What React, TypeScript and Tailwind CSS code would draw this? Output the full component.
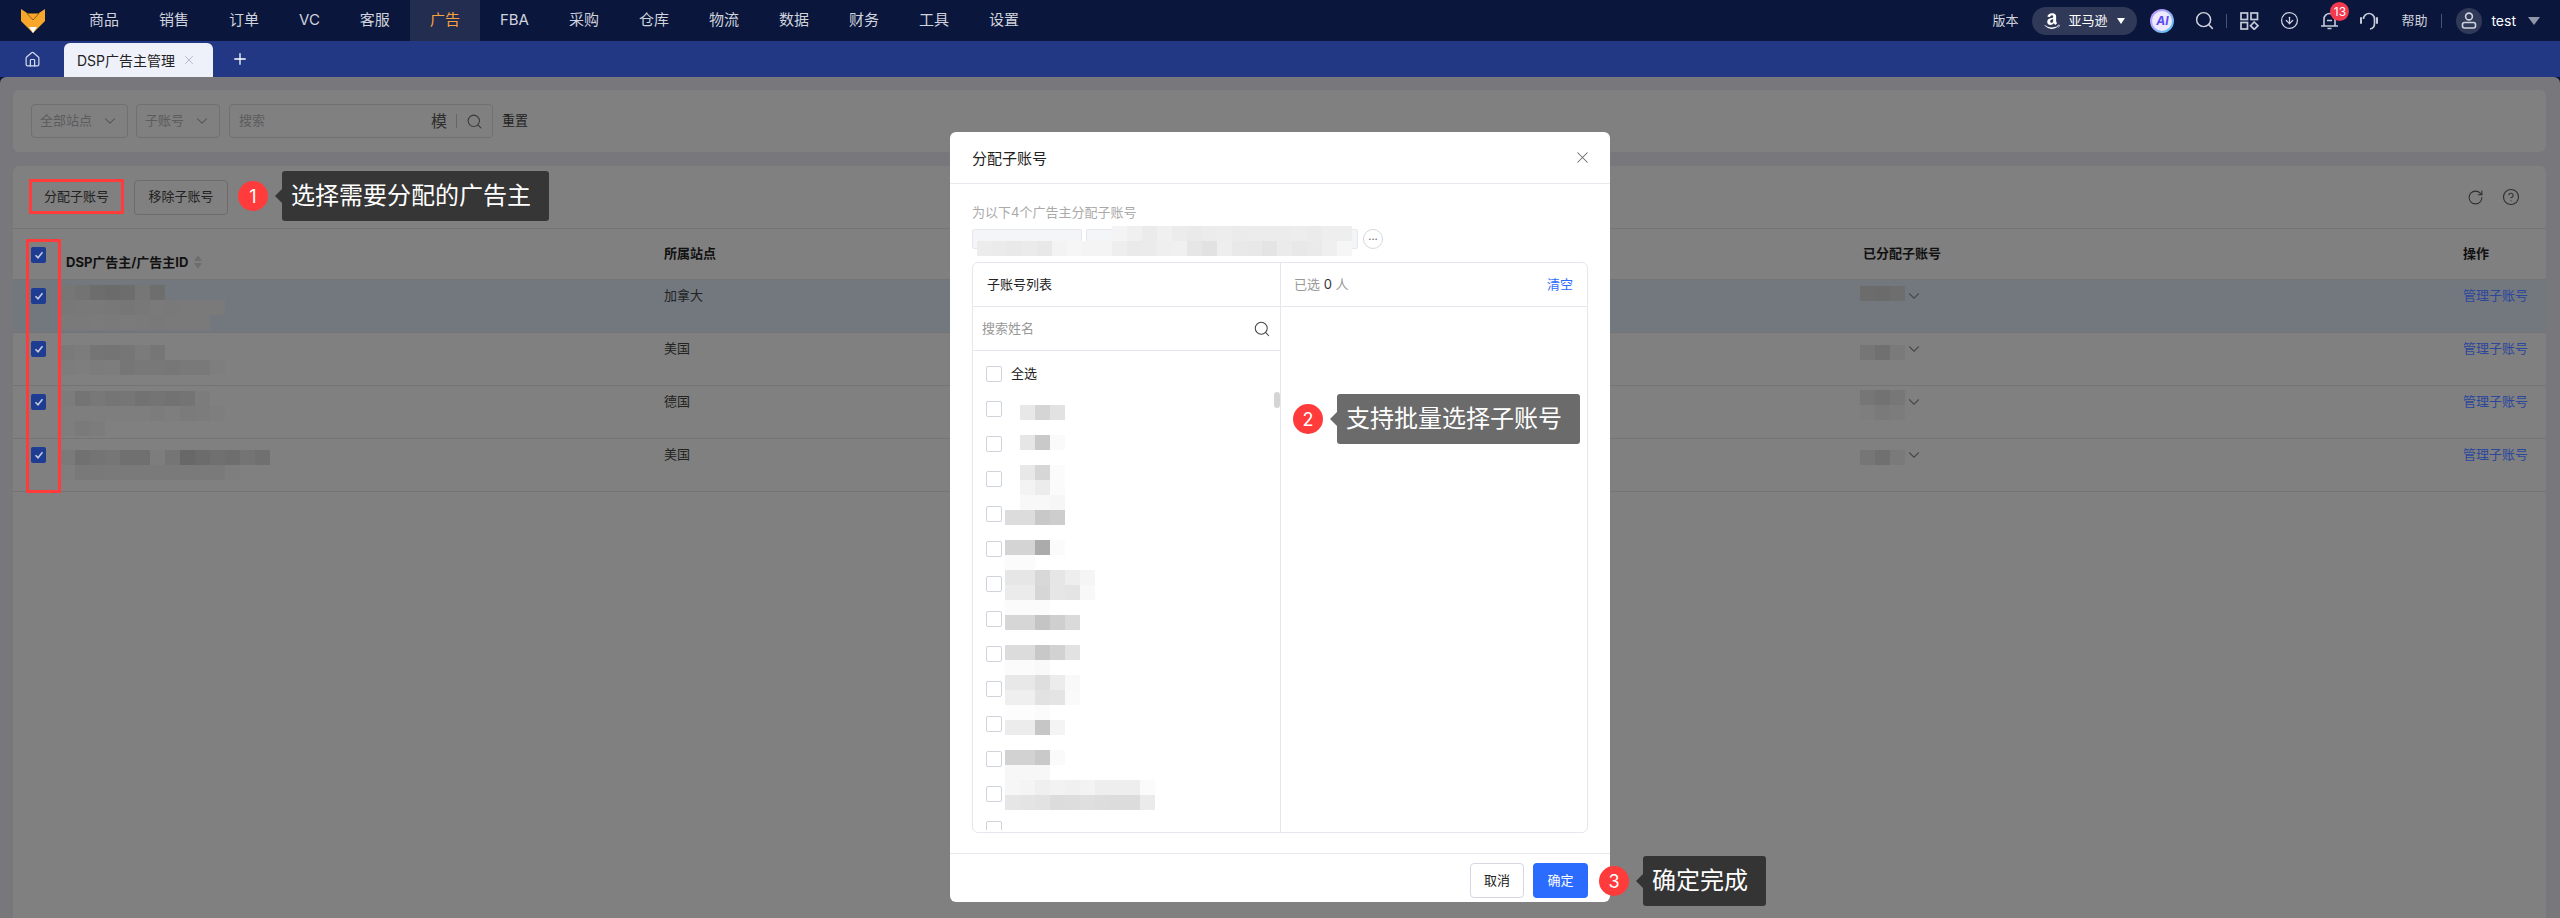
import {
  ChevronDown,
  CircleArrowDown,
  CircleHelp,
  House,
  Plus,
  RotateCw,
  Search,
  X,
} from "lucide-react";
import { FaAmazon } from "react-icons/fa";

const navItems = ["商品", "销售", "订单", "VC", "客服", "广告", "FBA", "采购", "仓库", "物流", "数据", "财务", "工具", "设置"];

// grey values per 15px cell, "--" leaves the cell empty
function Mosaic({ x, y, rows }: { x: number; y: number; rows: string[] }) {
  return (
    <div className="absolute flex flex-col" style={{ left: x, top: y }}>
      {rows.map((row, i) => (
        <div key={i} className="flex h-[15px]">
          {row.split(" ").map((g, j) => (
            <div
              key={j}
              className="h-[15px] w-[15px]"
              style={{ background: g === "--" ? "transparent" : `#${g}${g}${g}` }}
            />
          ))}
        </div>
      ))}
    </div>
  );
}

function Checkbox({ checked }: { checked?: boolean }) {
  if (checked) {
    return (
      <div className="flex h-[16px] w-[15px] items-center justify-center rounded-[2px] bg-[#1f3c93]">
        <svg width="10" height="10" viewBox="0 0 10 10" fill="none" stroke="#c4cbe0" strokeWidth="1.6">
          <path d="M1.5 5.2 4 7.8 8.5 2.2" />
        </svg>
      </div>
    );
  }
  return <div className="h-[16px] w-[16px] rounded-[2px] border border-[#cfd3dc] bg-white" />;
}

function Step({ n }: { n: number }) {
  return (
    <div className="flex h-[30px] w-[30px] items-center justify-center rounded-full bg-[#ff3b3b] text-[18px] text-white">
      {n}
    </div>
  );
}

function Arrow({ color }: { color: string }) {
  return (
    <div
      className="h-0 w-0 border-y-[7px] border-r-[7px] border-y-transparent"
      style={{ borderRightColor: color }}
    />
  );
}

function Select({ label, width }: { label: string; width: string }) {
  return (
    <div className={`flex h-[34px] items-center justify-between rounded-[4px] border border-[#707072] pl-[8px] pr-[8px] text-[13px] text-[#5c5c5e] ${width}`}>
      {label}
      <ChevronDown size={18} strokeWidth={1.4} className="text-[#4f4f51]" />
    </div>
  );
}

const rows = [
  { site: "加拿大", bg: "bg-[#73787f]" },
  { site: "美国", bg: "" },
  { site: "德国", bg: "" },
  { site: "美国", bg: "" },
];

export default function App() {
  return (
    <div className="relative h-[918px] w-[2560px] overflow-hidden bg-[#0a163c] text-[13px] [font-family:Inter,'Noto_Sans_CJK_SC',sans-serif]">
      {/* top nav */}
      <div className="flex h-[41px] items-stretch bg-[#0a163c] text-[#d0d3dc]">
        <div className="flex w-[69px] items-center pl-[21px]">
          <svg width="24" height="24" viewBox="0 0 24 24">
            <path d="M0 0 6 4h12l6-4v12L12 24 0 12Z" fill="#f9a72b" />
            <path d="M6 4.5h12L12 11Z" fill="#f9a72b" stroke="#8a6220" strokeWidth="1" />
            <path d="M8 18h8l-4 6Z" fill="#fff" />
          </svg>
        </div>
        {navItems.map((item) => (
          <div
            key={item}
            className={`flex items-center px-[20px] text-[15px] ${item === "广告" ? "bg-[#232d4f] text-[#f9a03f]" : ""}`}
          >
            {item}
          </div>
        ))}
        <div className="ml-auto flex items-center">
          <span className="text-[13px]">版本</span>
          <div className="ml-[14px] flex h-[28px] w-[105px] items-center rounded-full bg-[#303a58] pl-[11px] text-white">
            <FaAmazon size={18} />
            <span className="ml-[7px] text-[13px]">亚马逊</span>
            <div className="ml-[10px] h-0 w-0 border-x-[4.5px] border-t-[6px] border-x-transparent border-t-white" />
          </div>
          <div className="ml-[13px] flex h-[24px] w-[24px] items-center justify-center rounded-full bg-linear-to-br from-[#c98cff] to-[#2fc6f0] p-[2px]">
            <div className="flex h-full w-full items-center justify-center rounded-full bg-[#ece9ff] text-[12px] font-bold italic text-[#5b4cf0]">
              AI
            </div>
          </div>
          <Search size={21} strokeWidth={1.7} className="ml-[20px] text-[#d0d3dc]" />
          <div className="ml-[11px] h-[14px] w-px bg-[#4a5270]" />
          <svg width="19" height="18" viewBox="0 0 19 18" fill="none" stroke="#c6cbd8" strokeWidth="1.7" className="ml-[13px]">
            <rect x="1" y="1" width="6.5" height="6.5" />
            <rect x="11" y="1" width="6.5" height="6.5" />
            <rect x="1" y="10.5" width="6.5" height="6.5" />
            <path d="M14.2 10 18 13.7l-3.8 3.7-3.7-3.7Z" />
          </svg>
          <CircleArrowDown size={19} strokeWidth={1.6} className="ml-[21px] text-[#d0d3dc]" />
          <div className="relative ml-[21px]">
            <svg width="19" height="19" viewBox="0 0 19 19" fill="none" stroke="#c6cbd8" strokeWidth="1.6">
              <path d="M1 15h17M4 15V8a5.5 5.5 0 0 1 11 0v7M7.5 17.5h4M7 9.5h5" />
            </svg>
            <div className="absolute left-[10px] top-[-9px] flex h-[19px] w-[19px] items-center justify-center rounded-full bg-[#f5394f] text-[12px] text-white">
              13
            </div>
          </div>
          <svg width="19" height="19" viewBox="0 0 19 19" fill="none" stroke="#c6cbd8" strokeWidth="1.7" className="ml-[20px]">
            <path d="M4.5 8a5.5 5.5 0 0 1 11 0v4.5c0 3-1.5 5-4.5 5.5" />
            <path d="M2 7v5M18 7v5" strokeWidth="2" strokeLinecap="round" />
          </svg>
          <span className="ml-[23px] text-[13px]">帮助</span>
          <div className="ml-[14px] h-[14px] w-px bg-[#4a5270]" />
          <div className="ml-[14px] flex h-[26px] w-[26px] items-center justify-center rounded-full bg-[#303a58]">
            <svg width="16" height="17" viewBox="0 0 16 17" fill="none" stroke="#d0d3dc" strokeWidth="1.6">
              <circle cx="8" cy="4.5" r="3.4" />
              <rect x="1.5" y="10.5" width="13" height="5.5" rx="2" />
            </svg>
          </div>
          <span className="ml-[9px] text-[14px] text-white">test</span>
          <div className="ml-[12px] mr-[20px] h-0 w-0 border-x-[6px] border-t-[8px] border-x-transparent border-t-[#8f96aa]" />
        </div>
      </div>

      {/* tab bar */}
      <div className="flex h-[36px] items-end bg-[#233884]">
        <div className="flex h-[36px] w-[64px] items-center pl-[24px]">
          <House size={17} strokeWidth={1.7} className="text-[#d6dbea]" />
        </div>
        <div className="flex h-[34px] w-[149px] items-center rounded-t-[6px] bg-[#eef0fa] pl-[13px] text-[14px] text-[#222]">
          DSP广告主管理
          <X size={14} strokeWidth={1.5} className="ml-[7px] text-[#aab2c4]" />
        </div>
        <div className="flex h-[36px] items-center pl-[18px]">
          <Plus size={18} strokeWidth={1.7} className="text-white" />
        </div>
      </div>

      {/* page */}
      <div className="flex h-[841px] flex-col gap-[14px] rounded-t-[6px] bg-[#77777c] pl-[13px] pr-[14px] pt-[13px]">
        <div className="flex h-[62px] items-center rounded-[6px] bg-[#808080] pl-[18px]">
          <Select label="全部站点" width="w-[97px]" />
          <div className="w-[8px]" />
          <Select label="子账号" width="w-[84px]" />
          <div className="ml-[9px] flex h-[34px] w-[264px] items-center rounded-[4px] border border-[#707072] pl-[9px] pr-[9px] text-[#5c5c5e]">
            搜索
            <span className="ml-auto text-[16px] text-[#2f2f2f]">模</span>
            <div className="mx-[9px] h-[14px] w-px bg-[#666]" />
            <Search size={17} strokeWidth={1.5} className="text-[#3a3a3a]" />
          </div>
          <span className="ml-[9px] text-[#222]">重置</span>
        </div>

        <div className="flex flex-1 flex-col rounded-t-[6px] bg-[#808080]">
          <div className="flex h-[63px] shrink-0 items-center border-b border-[#747478] pl-[16px] pr-[26px]">
            <div className="flex h-[35px] w-[95px] items-center justify-center text-[#222]">分配子账号</div>
            <div className="ml-[10px] flex h-[35px] w-[94px] items-center justify-center rounded-[4px] border border-[#6c6c6e] text-[#222]">
              移除子账号
            </div>
            <RotateCw size={17} strokeWidth={1.5} className="ml-auto text-[#2f2f2f]" />
            <CircleHelp size={18} strokeWidth={1.5} className="ml-[18px] text-[#2f2f2f]" />
          </div>

          <div className="grid h-[51px] shrink-0 grid-cols-[53px_598px_1199px_600px_1fr] border-b border-[#747478] pt-[15px] font-bold leading-[18px] text-[#111]">
            <div className="pl-[18px] pt-[3px]">
              <Checkbox checked />
            </div>
            <div className="flex items-center">
              DSP广告主/广告主ID
              <div className="ml-[6px] flex flex-col gap-[2px]">
                <div className="h-0 w-0 border-x-[4px] border-b-[6px] border-x-transparent border-b-[#6e6e6e]" />
                <div className="h-0 w-0 border-x-[4px] border-t-[6px] border-x-transparent border-t-[#6e6e6e]" />
              </div>
            </div>
            <div>所属站点</div>
            <div>已分配子账号</div>
            <div>操作</div>
          </div>

          {rows.map((row, i) => (
            <div
              key={i}
              className={`grid h-[53px] shrink-0 grid-cols-[53px_598px_1199px_600px_1fr] border-b border-[#747478] pt-[6px] leading-[18px] text-[#222] ${row.bg}`}
            >
              <div className="pl-[18px] pt-[2px]">
                <Checkbox checked />
              </div>
              <div />
              <div>{row.site}</div>
              <div className="pl-[42px] pt-[1px]">
                <ChevronDown size={18} strokeWidth={1.5} className="text-[#4a4a4a]" />
              </div>
              <div className="text-[#2c479c]">管理子账号</div>
            </div>
          ))}
        </div>
      </div>

      {/* blurred names in the table */}
      <Mosaic x={60} y={285} rows={["76 73 6d 6b 6d 76 6e", "78 79 79 78 76 78 7a 79 7a 7a 7a", "7a 7a 7b 7a 7b 7a 79 7a 7a 7a"]} />
      <Mosaic x={60} y={345} rows={["7a 7c 75 74 76 7b 76", "7d 7e 7c 7d 76 78 78 77 79 79 7e"]} />
      <Mosaic x={60} y={391} rows={["7c 74 78 75 76 72 74 72 74 7c", "7e 7e 7e 7e 7e 7e 7c 7e 7b 7c 7e", "7e 7a 7c"]} />
      <Mosaic x={60} y={450} rows={["7a 71 74 76 70 70 7d 75 68 6c 70 6e 74 70", "7e 79 79 7a 7a 7a 7a 7a 7a 7a 7a 7e"]} />
      <Mosaic x={1860} y={286} rows={["6c 6b 6e"]} />
      <Mosaic x={1860} y={345} rows={["76 70 7a"]} />
      <Mosaic x={1860} y={390} rows={["76 72 77", "7e 7a 7c"]} />
      <Mosaic x={1860} y={450} rows={["76 70 7a"]} />

      {/* table callouts */}
      <div className="absolute left-[29px] top-[179px] h-[35px] w-[95px] border-[3px] border-[#ff3b3b]" />
      <div className="absolute left-[26px] top-[239px] h-[254px] w-[35px] border-[3px] border-[#ff3b3b]" />
      <div className="absolute left-[238px] top-[171px] flex h-[50px] items-center">
        <Step n={1} />
        <div className="ml-[7px]">
          <Arrow color="#363636" />
        </div>
        <div className="flex h-[50px] w-[267px] items-center rounded-[3px] bg-[#363636] pl-[9px] text-[24px] text-white">
          选择需要分配的广告主
        </div>
      </div>

      {/* dialog */}
      <div className="absolute left-[950px] top-[132px] flex h-[770px] w-[660px] flex-col rounded-[6px] bg-white text-[#222]">
        <div className="flex h-[52px] shrink-0 items-center justify-between border-b border-[#e8e9ee] pl-[22px] pr-[18px] pt-[3px] text-[15px]">
          分配子账号
          <X size={19} strokeWidth={1.3} className="mb-[4px] text-[#666]" />
        </div>
        <div className="flex flex-1 flex-col px-[22px] pt-[19px]">
          <div className="leading-[18px] text-[#aaa]">为以下4个广告主分配子账号</div>
          <div className="mt-[8px] flex h-[20px] items-center">
            <div className="h-[20px] w-[110px] rounded-[2px] border border-[#e6e8ee] bg-[#f4f5f8]" />
            <div className="ml-[4px] h-[20px] w-[272px] rounded-[2px] border border-[#e6e8ee] bg-[#f4f5f8]" />
            <div className="ml-[5px] flex h-[20px] w-[20px] items-center justify-center rounded-full border border-[#d5d8e0] pb-[5px] text-[11px] leading-none text-[#666]">
              ...
            </div>
          </div>
          <div className="mt-[13px] flex h-[571px] rounded-[6px] border border-[#e5e7ee]">
            <div className="flex w-[308px] flex-col border-r border-[#e5e7ee]">
              <div className="flex h-[44px] shrink-0 items-center border-b border-[#e5e7ee] pl-[14px]">子账号列表</div>
              <div className="flex h-[44px] shrink-0 items-center justify-between border-b border-[#e5e7ee] pl-[9px] pr-[9px] text-[#999]">
                搜索姓名
                <Search size={18} strokeWidth={1.4} className="text-[#444]" />
              </div>
              <div className="relative h-[479px] overflow-hidden pl-[13px] pt-[5px]">
                <div className="flex h-[35px] items-center gap-[9px]">
                  <Checkbox />
                  全选
                </div>
                {Array.from({ length: 13 }).map((_, i) => (
                  <div key={i} className="flex h-[35px] items-center">
                    <Checkbox />
                  </div>
                ))}
                <div className="absolute right-0 top-[41px] h-[16px] w-[6px] rounded-full bg-[#d5d5d5]" />
              </div>
            </div>
            <div className="flex flex-1 flex-col">
              <div className="flex h-[44px] shrink-0 items-center justify-between border-b border-[#e5e7ee] pl-[13px] pr-[14px] text-[#999]">
                <span>
                  已选 <span className="text-[#333]">0</span> 人
                </span>
                <span className="text-[#2b6cff]">清空</span>
              </div>
            </div>
          </div>
        </div>
        <div className="flex h-[49px] shrink-0 items-start justify-end gap-[9px] border-t border-[#e8e9ee] pr-[22px] pt-[9px]">
          <div className="flex h-[35px] w-[54px] items-center justify-center rounded-[4px] border border-[#d5d8e0]">取消</div>
          <div className="flex h-[35px] w-[55px] items-center justify-center rounded-[4px] bg-[#2b6cff] text-white">确定</div>
        </div>
      </div>

      {/* blurred text in the dialog */}
      <Mosaic
        x={977}
        y={226}
        rows={[
          "-- -- -- -- -- -- -- -- -- f4 f0 eb f0 ec ea ec ed eb ec ec ec ed eb ee ee",
          "ec eb e9 eb e8 f3 f6 f4 f4 ee ea eb ef f0 e6 e2 ee e9 e8 e4 eb e8 ea ef f6",
        ]}
      />
      <Mosaic
        x={1005}
        y={405}
        rows={[
          "-- e8 d5 e2",
          "-- -- -- --",
          "-- e6 c9 fa",
          "-- -- -- --",
          "-- e8 d6 fb",
          "-- f3 ec fb",
          "-- f8 f8 f6",
          "dc dc c8 cd",
          "-- -- -- --",
          "d4 d4 ab fb",
          "fb fb -- --",
          "e6 e6 d8 e6 ee f5",
          "eb eb d6 e6 e4 f8",
          "fb fb fb",
          "d6 d6 c4 cf da",
          "-- -- -- --",
          "dc dc c8 d2 e2",
          "fb fb f9",
          "e8 e8 de ec f9",
          "ef ef e2 e4 fa",
          "fd fd fb",
          "ec ec c6 f4",
          "-- -- -- --",
          "d2 d2 c9 fa",
          "f7 f7 f7",
          "f6 f4 ef f2 f0 f3 ee ee ee fb",
          "e6 e4 e2 dc dd df dd dc dc eb",
        ]}
      />

      {/* dialog callouts */}
      <div className="absolute left-[1293px] top-[394px] flex h-[50px] items-center">
        <Step n={2} />
        <div className="ml-[7px]">
          <Arrow color="#6b6b6b" />
        </div>
        <div className="flex h-[50px] w-[243px] items-center rounded-[3px] bg-[#6b6b6b] pl-[9px] text-[24px] text-white">
          支持批量选择子账号
        </div>
      </div>
      <div className="absolute left-[1599px] top-[856px] flex h-[50px] items-center">
        <Step n={3} />
        <div className="ml-[7px]">
          <Arrow color="#343434" />
        </div>
        <div className="flex h-[50px] w-[123px] items-center rounded-[3px] bg-[#343434] pl-[9px] text-[24px] text-white">
          确定完成
        </div>
      </div>
    </div>
  );
}
